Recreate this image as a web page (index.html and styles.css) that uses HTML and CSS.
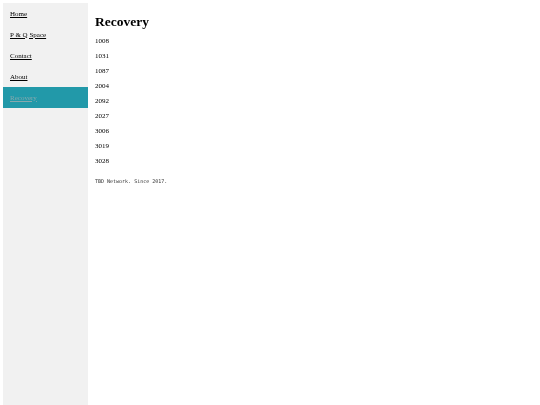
FILE: index.html
```html
<!DOCTYPE html>
<html>
<head>
<meta charset="utf-8">
<link rel="stylesheet" href="styles.css">
</head>
<body>
<div class="layout">
  <ul class="sidebar">
    <li><a href="#">Home</a></li>
    <li><a href="#">P &amp; Q Space</a></li>
    <li><a href="#">Contact</a></li>
    <li><a href="#">About</a></li>
    <li class="active"><a href="#">Recovery</a></li>
  </ul>
  <main class="content">
    <h1 class="title">Recovery</h1>
    <p class="num">1008</p>
    <p class="num">1031</p>
    <p class="num">1087</p>
    <p class="num">2004</p>
    <p class="num">2092</p>
    <p class="num">2027</p>
    <p class="num">3006</p>
    <p class="num">3019</p>
    <p class="num">3028</p>
    <p class="footer">TBD Network. Since 2017.</p>
  </main>
</div>
</body>
</html>
```
FILE: styles.css
```css
html, body {
  margin: 0;
  padding: 0;
  background: #ffffff;
  font-family: "Liberation Serif", "Times New Roman", serif;
  color: #000;
  -webkit-font-smoothing: antialiased;
}
body {
  padding: 3px 0 0 3px;
  height: 405px;
  box-sizing: border-box;
  overflow: hidden;
}
.layout {
  display: flex;
  align-items: stretch;
  height: 402px;
  will-change: transform;
}
.sidebar {
  list-style: none;
  margin: 0;
  padding: 0;
  width: 85px;
  flex: none;
  background: #f1f1f1;
}
.sidebar li a {
  display: block;
  padding: 6.5px 7px;
  font-size: 7px;
  line-height: 8px;
  color: #000;
  text-decoration: underline;
}
.sidebar li.active a {
  background: #2299a9;
  color: #86a9ae;
}
.content {
  padding-left: 7px;
  flex: 1;
}
.title {
  font-size: 13.5px;
  line-height: 16px;
  margin: 11px 0 7px;
  font-weight: bold;
}
.num {
  font-size: 7px;
  line-height: 8px;
  margin: 0 0 7px;
}
.footer {
  font-family: "DejaVu Sans Mono", "Liberation Mono", monospace;
  font-size: 5px;
  line-height: 7px;
  margin: 13px 0 0;
  color: #333;
}
```
